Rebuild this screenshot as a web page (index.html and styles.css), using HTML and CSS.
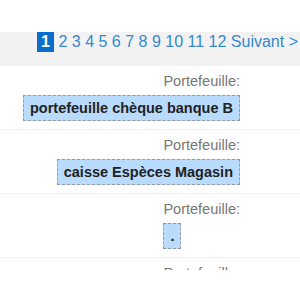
FILE: index.html
```html
<!DOCTYPE html>
<html lang="fr">
<head>
<meta charset="utf-8">
<title>Portefeuilles</title>
<link rel="stylesheet" href="styles.css">
</head>
<body>
<div class="top"></div>
<nav class="pager">
  <span class="current">1</span>
  <a href="#">2</a> <a href="#">3</a> <a href="#">4</a> <a href="#">5</a> <a href="#">6</a> <a href="#">7</a> <a href="#">8</a> <a href="#">9</a> <a href="#">10</a> <a href="#">11</a> <a href="#">12</a> <a href="#">Suivant &gt;</a>
</nav>
<div class="list">
  <div class="row">
    <div class="entry">
      <div class="label">Portefeuille:</div>
      <div class="value">portefeuille chèque banque B</div>
    </div>
  </div>
  <div class="row">
    <div class="entry">
      <div class="label">Portefeuille:</div>
      <div class="value">caisse Espèces Magasin</div>
    </div>
  </div>
  <div class="row">
    <div class="entry">
      <div class="label">Portefeuille:</div>
      <div class="value">.</div>
    </div>
  </div>
  <div class="row">
    <div class="entry">
      <div class="label">Portefeuille:</div>
    </div>
  </div>
</div>
</body>
</html>
```
FILE: styles.css
```css
html, body {
  margin: 0;
  padding: 0;
  background: #fff;
  font-family: "Liberation Sans", Arial, Helvetica, sans-serif;
}
.top {
  height: 32px;
}
.pager {
  height: 34px;
  background: #f2f2f2;
  text-align: right;
  padding-right: 2px;
  font-size: 16px;
  line-height: 20px;
  white-space: nowrap;
  overflow: hidden;
}
.pager a {
  color: #3489cf;
  text-decoration: none;
}
.pager .current {
  display: inline-block;
  background: #0a6dcc;
  color: #fff;
  font-weight: bold;
  width: 17px;
  text-align: center;
  line-height: 20px;
  vertical-align: top;
}
.list {
  height: 204px;
  overflow: hidden;
}
.row {
  display: flex;
  justify-content: flex-end;
  padding: 7px 60px 8px 0;
  border-bottom: 1px solid #eeeeee;
}
.entry {
  display: flex;
  flex-direction: column;
  align-items: flex-start;
}
.label {
  align-self: flex-end;
  color: #777;
  font-size: 14.5px;
  line-height: 17px;
  margin-bottom: 5px;
}
.value {
  background: #b9dbfd;
  border: 1px dashed #9a9a9a;
  color: #222;
  font-weight: bold;
  font-size: 14.5px;
  line-height: 18px;
  padding: 3px 6px;
}
```
